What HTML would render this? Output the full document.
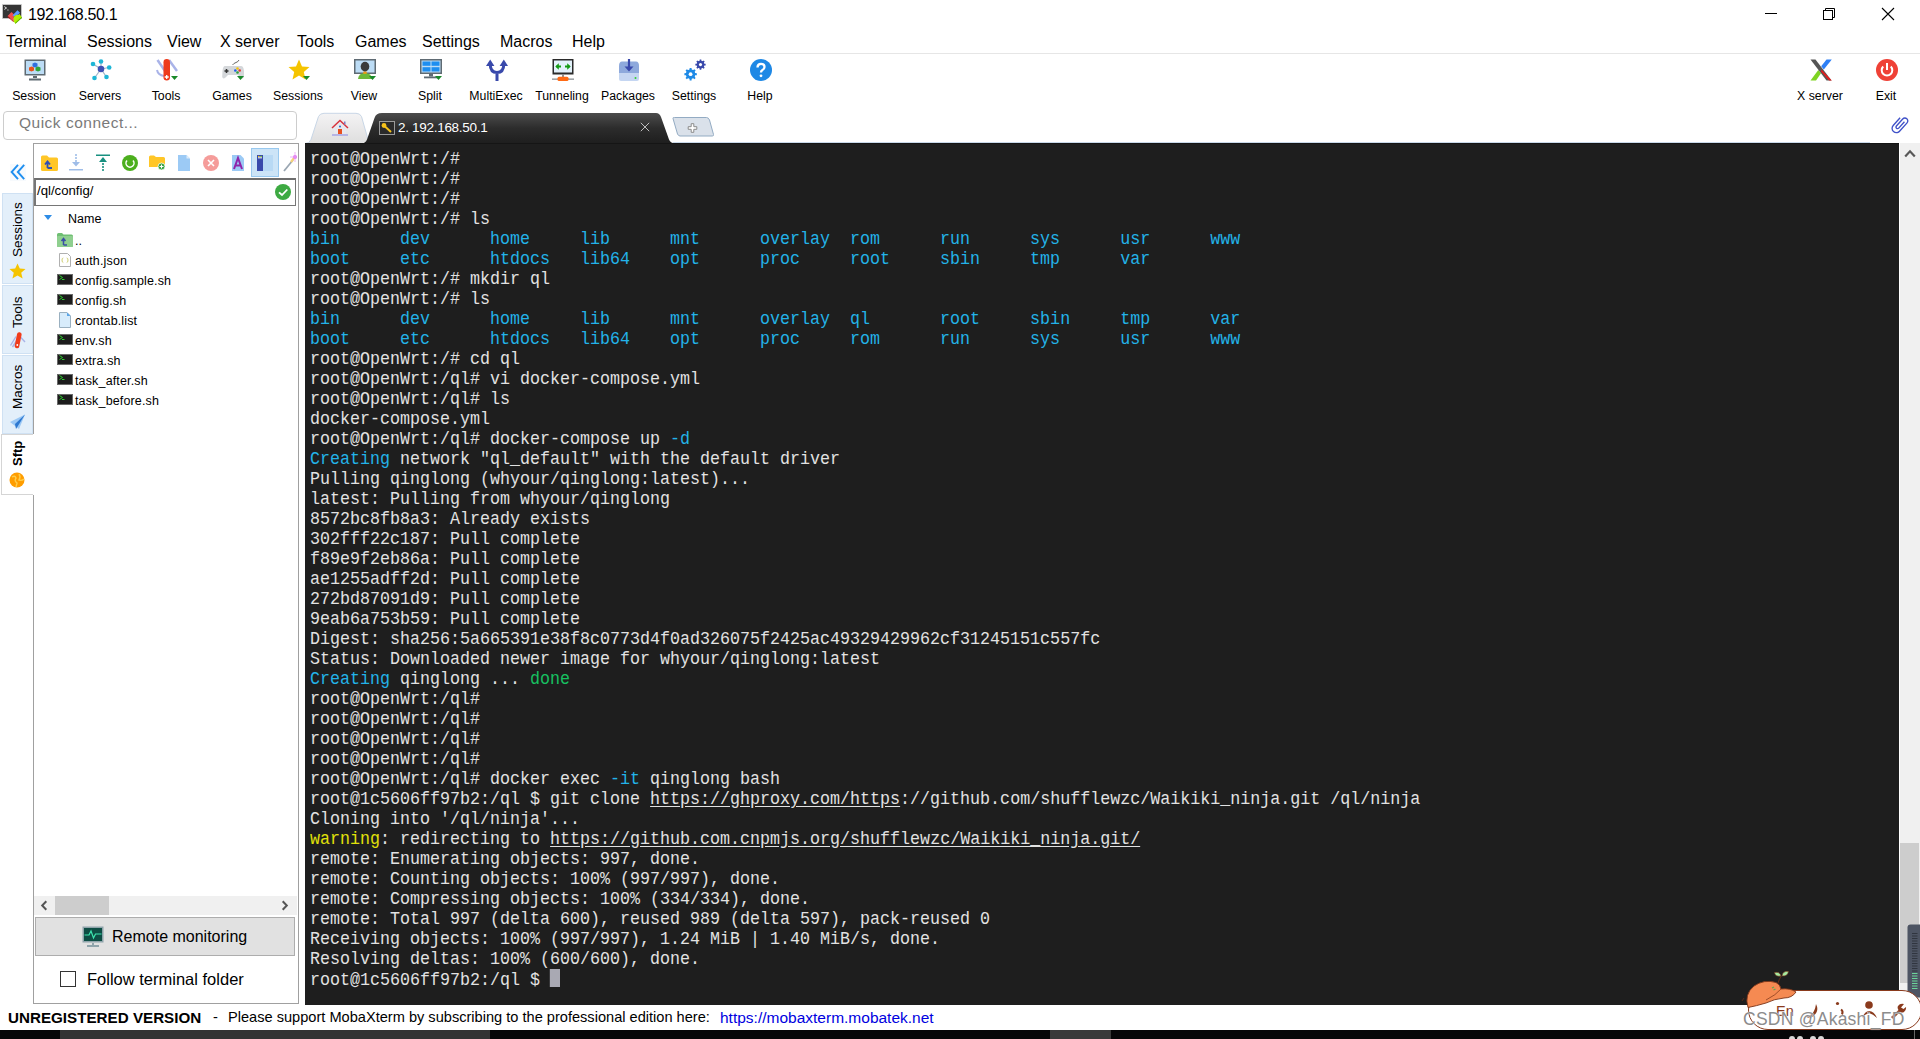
<!DOCTYPE html>
<html><head><meta charset="utf-8"><style>
*{margin:0;padding:0;box-sizing:border-box}
html,body{width:1920px;height:1039px;overflow:hidden;background:#fff;font-family:"Liberation Sans",sans-serif;color:#000}
.a{position:absolute}
.t{position:absolute;white-space:pre;line-height:1}
#term{position:absolute;left:305px;top:143px;width:1594px;height:862px;background:#1e1e1e;overflow:hidden}
#tt{position:absolute;left:5px;top:6px;font-family:"Liberation Mono",monospace;font-size:18px;line-height:20px;transform:scaleX(0.92593);transform-origin:0 0;color:#e2e2e2;white-space:pre}
#tt .c{color:#23b3e8}
#tt .g{color:#17c061}
#tt .y{color:#e1e10a}
#tt .u{text-decoration:underline;text-underline-offset:2px}
#tt .k{background:#a9a9b3;display:inline-block;width:10.8px;height:18px;vertical-align:1px}
.menu{font-size:16px;top:34px}
.tb{font-size:12.3px;top:90px;width:80px;text-align:center}
.vt{position:absolute;left:2px;width:31px;background:#e3effa;border:1px solid #cfe1f3}
.vtx{position:absolute;font-size:13.5px;transform:rotate(-90deg);transform-origin:0 0;white-space:pre;line-height:1}
.fl{position:absolute;left:75px;font-size:12.5px;line-height:1;white-space:pre;letter-spacing:0.15px}
</style></head><body>
<svg class="a" style="left:0px;top:0px" width="26" height="26" viewBox="0 0 26 26">
<rect x="2.5" y="4.5" width="19" height="14" fill="#353535" stroke="#cfcfcf" stroke-width="0.8"/>
<path d="M4.3 6.6 L6.6 8 L4.3 9.4" stroke="#e0e0e0" stroke-width="1" fill="none"/><path d="M7 10 H8.8" stroke="#bbb" stroke-width="0.8"/>
<path d="M7.6 16 L11.5 12 L13.5 14 L15 15.6 L13.7 17 L14 21.5 Z" fill="#f25050"/>
<path d="M7.6 16 L14 21.5 L13.5 22 L7.8 17.2Z" fill="#b01010"/>
<path d="M12.4 15.5 L17.5 10.3 L20 12.8 L18.2 14.8 L16.2 15 L15 16.5 Z" fill="#5b9cff"/>
<path d="M13.7 17 L16 15 L18.2 15 L19.6 14 L22 17.8 L15.5 23.7 L13.7 21.5 Z" fill="#b2f000"/>
<path d="M22 17.8 L15.5 23.7 L15 23 L21.5 17Z" fill="#5ab000"/>
</svg>
<div class="t" style="left:28px;top:6.5px;font-size:16px;letter-spacing:-0.35px">192.168.50.1</div>
<div class="a" style="left:1765px;top:13px;width:12px;height:1px;background:#000"></div>
<svg class="a" style="left:1822px;top:7px" width="15" height="15" viewBox="0 0 15 15">
<rect x="1.5" y="3.5" width="9" height="9" fill="none" stroke="#000" stroke-width="1"/>
<path d="M3.5 3.5 V1.5 H12.5 V10.5 H10.5" fill="none" stroke="#000" stroke-width="1"/></svg>
<svg class="a" style="left:1881px;top:7px" width="15" height="15" viewBox="0 0 15 15">
<path d="M1 1 L13 13 M13 1 L1 13" stroke="#000" stroke-width="1.1"/></svg>
<div class="t menu" style="left:6px">Terminal</div>
<div class="t menu" style="left:87px">Sessions</div>
<div class="t menu" style="left:167px">View</div>
<div class="t menu" style="left:220px">X server</div>
<div class="t menu" style="left:297px">Tools</div>
<div class="t menu" style="left:355px">Games</div>
<div class="t menu" style="left:422px">Settings</div>
<div class="t menu" style="left:500px">Macros</div>
<div class="t menu" style="left:572px">Help</div>
<div class="a" style="left:0;top:53px;width:1920px;height:1px;background:#e6e6e6"></div>
<div class="t tb" style="left:-6px">Session</div>
<svg class="a" style="left:24px;top:59px" width="22" height="22" viewBox="0 0 22 22">
<rect x="0.5" y="0.5" width="21" height="16" fill="#5f6b73"/>
<rect x="2" y="2" width="18" height="13" fill="#bcdcf5"/>
<rect x="9" y="17" width="4" height="2" fill="#5f6b73"/><rect x="5" y="19.5" width="12" height="2" fill="#5f6b73"/>
<path d="M8.5 4.5 L11 3.5 L13.5 4.5 V7.5 L11 8.5 L8.5 7.5Z" fill="#2f6fe0"/>
<path d="M5 8.5 L7.5 7.5 L10 8.5 V11.5 L7.5 12.5 L5 11.5Z" fill="#e8531d"/>
<path d="M11.5 8.5 L14 7.5 L16.5 8.5 V11.5 L14 12.5 L11.5 11.5Z" fill="#2ea33a"/>
</svg>
<div class="t tb" style="left:60px">Servers</div>
<svg class="a" style="left:90px;top:59px" width="22" height="22" viewBox="0 0 22 22">
<g stroke="#9fb4c8" stroke-width="1.2"><line x1="11" y1="10" x2="11" y2="2.5"/><line x1="11" y1="10" x2="3" y2="5"/><line x1="11" y1="10" x2="19" y2="8.5"/><line x1="11" y1="10" x2="4.5" y2="19"/><line x1="11" y1="10" x2="16.5" y2="18"/></g>
<circle cx="11" cy="10" r="3.3" fill="#3f51b5"/>
<circle cx="11" cy="2.5" r="2.3" fill="#1eb6d6"/><circle cx="3" cy="5" r="2.3" fill="#1eb6d6"/><circle cx="19.2" cy="8.5" r="2.3" fill="#1eb6d6"/>
<circle cx="4.5" cy="19" r="2.3" fill="#1eb6d6"/><circle cx="16.5" cy="18" r="2.3" fill="#1eb6d6"/>
</svg>
<div class="t tb" style="left:126px">Tools</div>
<svg class="a" style="left:156px;top:59px" width="22" height="22" viewBox="0 0 22 22">
<path d="M1.5 1 L9 12" stroke="#a9b3e8" stroke-width="2.5"/>
<path d="M13 1 L21 12" stroke="#a9b3e8" stroke-width="2.5"/>
<path d="M1 11 Q2 16 8 17" stroke="#a9b3e8" stroke-width="2" fill="none"/>
<rect x="7.5" y="0" width="6.5" height="21.5" rx="3.2" fill="#ee3b1c"/>
<path d="M10.7 16 V20 M8.7 18 H12.7" stroke="#fff" stroke-width="1.3"/>
<path d="M15 17 H22 L18.5 21 Z" fill="#1a8a2a"/></svg>
<div class="t tb" style="left:192px">Games</div>
<svg class="a" style="left:222px;top:59px" width="22" height="22" viewBox="0 0 22 22">
<path d="M10.5 6 Q12 4 14 3.5 Q16 3 17 1" stroke="#555" stroke-width="0.9" fill="none"/>
<path d="M3 7 H19 Q21.5 7 22 12 L22 18 Q21 20.5 18.5 18.5 L16 16 H6 L3.5 18.5 Q1 20.5 0.2 18 L0.5 12 Q1 7 3 7Z" fill="#d4d7da"/>
<path d="M4.5 10 V14 M2.5 12 H6.5" stroke="#333" stroke-width="1.5"/>
<circle cx="15.5" cy="9.5" r="1.3" fill="#f4c20d"/><circle cx="13.3" cy="11.5" r="1.3" fill="#1e5ee8"/><circle cx="17.7" cy="11.5" r="1.3" fill="#e53935"/><circle cx="15.5" cy="13.5" r="1.3" fill="#2e9e3a"/>
<path d="M15 17 H22 L18.5 21 Z" fill="#1a8a2a"/></svg>
<div class="t tb" style="left:258px">Sessions</div>
<svg class="a" style="left:288px;top:59px" width="22" height="22" viewBox="0 0 22 22">
<path d="M11 0.5 L14 7.5 L21.5 8 L15.8 13 L17.5 20.5 L11 16.5 L4.5 20.5 L6.2 13 L0.5 8 L8 7.5Z" fill="#f5c400"/>
<path d="M15 17 H22 L18.5 21 Z" fill="#1a8a2a"/></svg>
<div class="t tb" style="left:324px">View</div>
<svg class="a" style="left:354px;top:59px" width="22" height="22" viewBox="0 0 22 22">
<rect x="0" y="0" width="22" height="15" fill="#5f6b73"/>
<rect x="1.5" y="1.5" width="19" height="12" fill="#bcdcf5"/>
<path d="M4 20 Q4.5 14 11 14 Q17.5 14 18 20Z" fill="#6cb83a"/>
<rect x="9.3" y="12.5" width="3.4" height="2.3" fill="#f39c12"/>
<ellipse cx="11" cy="7.6" rx="4.3" ry="4.9" fill="#3a3a3a"/>
<path d="M15 17 H22 L18.5 21 Z" fill="#1a8a2a"/></svg>
<div class="t tb" style="left:390px">Split</div>
<svg class="a" style="left:420px;top:59px" width="22" height="22" viewBox="0 0 22 22">
<rect x="0" y="0" width="22" height="15" fill="#5f6b73"/>
<rect x="1.5" y="1.5" width="19" height="12" fill="#bcdcf5"/>
<rect x="2.5" y="2.5" width="8" height="4.3" fill="#1e8ef0"/><rect x="11.5" y="2.5" width="8" height="4.3" fill="#1e8ef0"/>
<rect x="2.5" y="8.2" width="8" height="4.3" fill="#1e8ef0"/><rect x="11.5" y="8.2" width="8" height="4.3" fill="#1e8ef0"/>
<rect x="9" y="15" width="4" height="2.5" fill="#5f6b73"/><rect x="4" y="17.5" width="14" height="1.8" fill="#5f6b73"/>
<path d="M15 17 H22 L18.5 21 Z" fill="#1a8a2a"/></svg>
<div class="t tb" style="left:456px">MultiExec</div>
<svg class="a" style="left:486px;top:59px" width="22" height="22" viewBox="0 0 22 22">
<path d="M4.2 5 Q4.2 13.5 11 13.5 Q17.8 13.5 17.8 5 M11 13.5 V22" stroke="#3949ab" stroke-width="3" fill="none"/>
<path d="M0 7 L4.2 0.5 L8.4 7Z" fill="#3949ab"/><path d="M13.6 7 L17.8 0.5 L22 7Z" fill="#3949ab"/>
</svg>
<div class="t tb" style="left:522px">Tunneling</div>
<svg class="a" style="left:552px;top:59px" width="22" height="22" viewBox="0 0 22 22">
<rect x="0.5" y="0" width="21" height="15.5" fill="#2b2b2b"/>
<rect x="2" y="1.5" width="18" height="12" fill="#e3f1fb"/>
<path d="M4.5 7.5 H9 M13 7.5 H17.5" stroke="#139a13" stroke-width="1.8"/>
<path d="M3.3 7.5 L6.8 4.3 V10.7Z M18.7 7.5 L15.2 4.3 V10.7Z" fill="#139a13"/>
<rect x="10.2" y="15.5" width="1.6" height="3" fill="#777"/>
<rect x="0" y="19.5" width="22" height="1.3" fill="#8a8f94"/>
<rect x="5.5" y="17.8" width="11" height="4.2" rx="1.5" fill="#ff6a14"/>
</svg>
<div class="t tb" style="left:588px">Packages</div>
<svg class="a" style="left:618px;top:59px" width="22" height="22" viewBox="0 0 22 22">
<path d="M1 7 Q1 2.5 4 2.5 H18 Q21 2.5 21 7 V14 H1Z" fill="#8ea9dc"/>
<path d="M1 14 H21 V20 Q21 22 19 22 H3 Q1 22 1 20Z" fill="#c5d6f2"/>
<circle cx="17.5" cy="19" r="1" fill="#2fd12f"/>
<path d="M11 0 V9" stroke="#3949ab" stroke-width="2.2"/><path d="M6.5 7.5 L11 12.5 L15.5 7.5Z" fill="#3949ab"/>
</svg>
<div class="t tb" style="left:654px">Settings</div>
<svg class="a" style="left:684px;top:59px" width="22" height="22" viewBox="0 0 22 22"><polygon points="11.00,14.08 12.83,14.25 12.83,16.15 11.00,16.32 10.50,17.52 11.67,18.93 10.33,20.27 8.92,19.10 7.72,19.60 7.55,21.43 5.65,21.43 5.48,19.60 4.28,19.10 2.87,20.27 1.53,18.93 2.70,17.52 2.20,16.32 0.37,16.15 0.37,14.25 2.20,14.08 2.70,12.88 1.53,11.47 2.87,10.13 4.28,11.30 5.48,10.80 5.65,8.97 7.55,8.97 7.72,10.80 8.92,11.30 10.33,10.13 11.67,11.47 10.50,12.88" fill="#1e8ae6"/><circle cx="6.6" cy="15.2" r="4.63" fill="#1e8ae6"/><circle cx="6.6" cy="15.2" r="1.89" fill="#fff"/><polygon points="20.13,4.68 21.64,4.82 21.64,6.38 20.13,6.52 19.72,7.52 20.69,8.68 19.58,9.79 18.42,8.82 17.42,9.23 17.28,10.74 15.72,10.74 15.58,9.23 14.58,8.82 13.42,9.79 12.31,8.68 13.28,7.52 12.87,6.52 11.36,6.38 11.36,4.82 12.87,4.68 13.28,3.68 12.31,2.52 13.42,1.41 14.58,2.38 15.58,1.97 15.72,0.46 17.28,0.46 17.42,1.97 18.42,2.38 19.58,1.41 20.69,2.52 19.72,3.68" fill="#3949ab"/><circle cx="16.5" cy="5.6" r="3.82" fill="#3949ab"/><circle cx="16.5" cy="5.6" r="1.56" fill="#fff"/></svg>
<div class="t tb" style="left:720px">Help</div>
<svg class="a" style="left:750px;top:59px" width="22" height="22" viewBox="0 0 22 22">
<circle cx="11" cy="11" r="11" fill="#1e88e5"/>
<path d="M7.5 8.5 Q7.5 4.8 11 4.8 Q14.5 4.8 14.5 8 Q14.5 10 12.2 11.2 Q11 11.9 11 13.5" stroke="#fff" stroke-width="2.3" fill="none"/>
<circle cx="11" cy="16.8" r="1.4" fill="#fff"/>
</svg>
<div class="t tb" style="left:1780px">X server</div>
<svg class="a" style="left:1810px;top:59px" width="22" height="22" viewBox="0 0 22 22">
<path d="M6 21.5 H0.5 L8.3 11 L11 14.3Z" fill="#7ed321"/>
<path d="M16.5 0.5 H21.8 L13.8 10.5 L11.2 7.2Z" fill="#2f80f5"/>
<path d="M0.5 0.5 H5.5 L21.5 21.5 H16.5Z" fill="#555"/>
<path d="M11.5 10.5 L21.8 21.5 H19 L11 12.5Z" fill="#e41e1e"/>
</svg>
<div class="t tb" style="left:1846px">Exit</div>
<svg class="a" style="left:1876px;top:59px" width="22" height="22" viewBox="0 0 22 22">
<circle cx="11" cy="11" r="11" fill="#ef4136"/>
<path d="M7.2 7.5 A5.3 5.3 0 1 0 14.8 7.5" stroke="#fff" stroke-width="2" fill="none"/>
<path d="M11 4 V11" stroke="#fff" stroke-width="2"/>
</svg>
<div class="a" style="left:3px;top:111px;width:294px;height:29px;border:1px solid #cdcdcd;border-radius:4px"></div>
<div class="t" style="left:19px;top:115px;font-size:15.5px;color:#7a7a7a;letter-spacing:0.5px">Quick connect...</div>
<svg class="a" style="left:300px;top:110px" width="420" height="34" viewBox="0 0 420 34">
<defs><linearGradient id="hg" x1="0" y1="0" x2="0" y2="1"><stop offset="0" stop-color="#f4f3f4"/><stop offset="1" stop-color="#dedede"/></linearGradient>
<linearGradient id="dg" x1="0" y1="0" x2="0" y2="1"><stop offset="0" stop-color="#4c4c4c"/><stop offset="0.5" stop-color="#2c2c2c"/><stop offset="1" stop-color="#1e1e1e"/></linearGradient></defs>
<path d="M5 33.5 Q9.5 33.5 11 29.5 L18.5 6.5 Q20 3.3 24 3.3 L56 3.3 Q60 3.3 61.5 6.5 L68 29.5 Q69 33.5 73 33.5Z" fill="url(#hg)" stroke="#c8d6e6" stroke-width="1"/>
<path d="M61 33.5 Q65.5 33.5 67 29.5 L74.5 8 Q76 3 82 3 L356 3 Q359.5 3 361 7 L369 29.5 Q370.5 33.5 376 33.5Z" fill="url(#dg)"/>
<path d="M373 8.5 Q372.5 7.5 374.5 7.5 L406.5 7.5 Q408.5 7.5 409.5 10 L413.5 24.5 Q413.8 26 412.3 26 L380 26 Q378.5 26 377.5 24Z" fill="#dae1ea" stroke="#93abc3" stroke-width="1"/>
<path d="M391.2 13.7 h2.6 v3 h3 v2.6 h-3 v3 h-2.6 v-3 h-3 v-2.6 h3Z" fill="#fff" stroke="#8a8a8a" stroke-width="1"/>
</svg>
<svg class="a" style="left:331px;top:119px" width="18" height="18" viewBox="0 0 18 18">
<path d="M3 8 V16 H15 V8 L9 3Z" fill="#e8e8ee"/>
<rect x="7" y="10" width="4" height="6" fill="#e8501e"/>
<circle cx="9" cy="7.5" r="1" fill="#2a6ac8"/>
<rect x="1" y="15" width="16" height="2" fill="#b5b5e5"/>
<path d="M1 9 L9 1.5 L17 9" stroke="#d8323c" stroke-width="1.5" fill="none"/>
<rect x="13" y="2.5" width="1.5" height="3" fill="#8080c0"/></svg>
<svg class="a" style="left:379px;top:121px" width="16" height="14" viewBox="0 0 16 14">
<rect x="0.5" y="0.5" width="15" height="13" fill="#2a2a2a" stroke="#9a9a9a" stroke-width="1"/>
<circle cx="5" cy="4.5" r="2.4" fill="#f5c21b"/>
<path d="M6 5.5 L12 11" stroke="#f5c21b" stroke-width="2"/></svg>
<div class="t" style="left:398px;top:121px;font-size:13.5px;color:#fff;letter-spacing:-0.3px">2. 192.168.50.1</div>
<svg class="a" style="left:640px;top:122px" width="10" height="10" viewBox="0 0 10 10"><path d="M0.8 0.8 L9.2 9.2 M9.2 0.8 L0.8 9.2" stroke="#cfcfcf" stroke-width="0.9"/></svg>
<div class="a" style="left:673px;top:142px;width:1197px;height:1px;background:#c9d9ea"></div>
<svg class="a" style="left:1890px;top:115px" width="20" height="20" viewBox="0 0 20 20"><g transform="translate(-0.8 -0.8) scale(0.9) rotate(42 12 12) translate(24 0) scale(-1 1)"><path d="M16.5 6v11.5c0 2.21-1.79 4-4 4s-4-1.79-4-4V5c0-1.38 1.12-2.5 2.5-2.5s2.5 1.12 2.5 2.5v10.5c0 .55-.45 1-1 1s-1-.45-1-1V6H10v9.5c0 1.380 1.12 2.5 2.5 2.5s2.5-1.12 2.5-2.5V5c0-2.21-1.79-4-4-4S7 2.79 7 5v12.5c0 3.04 2.46 5.5 5.5 5.5s5.5-2.46 5.5-5.5V6h-1.5z" fill="#3f51c8"/></g></svg>
<div id="term"><div class="a" style="left:0;top:0;width:1594px;height:1px;background:#151515"></div><div id="tt">root@OpenWrt:/#
root@OpenWrt:/#
root@OpenWrt:/#
root@OpenWrt:/# ls
<span class="c">bin      dev      home     lib      mnt      overlay  rom      run      sys      usr      www</span>
<span class="c">boot     etc      htdocs   lib64    opt      proc     root     sbin     tmp      var</span>
root@OpenWrt:/# mkdir ql
root@OpenWrt:/# ls
<span class="c">bin      dev      home     lib      mnt      overlay  ql       root     sbin     tmp      var</span>
<span class="c">boot     etc      htdocs   lib64    opt      proc     rom      run      sys      usr      www</span>
root@OpenWrt:/# cd ql
root@OpenWrt:/ql# vi docker-compose.yml
root@OpenWrt:/ql# ls
docker-compose.yml
root@OpenWrt:/ql# docker-compose up <span class="c">-d</span>
<span class="c">Creating</span> network &quot;ql_default&quot; with the default driver
Pulling qinglong (whyour/qinglong:latest)...
latest: Pulling from whyour/qinglong
8572bc8fb8a3: Already exists
302fff22c187: Pull complete
f89e9f2eb86a: Pull complete
ae1255adff2d: Pull complete
272bd87091d9: Pull complete
9eab6a753b59: Pull complete
Digest: sha256:5a665391e38f8c0773d4f0ad326075f2425ac49329429962cf31245151c557fc
Status: Downloaded newer image for whyour/qinglong:latest
<span class="c">Creating</span> qinglong ... <span class="g">done</span>
root@OpenWrt:/ql#
root@OpenWrt:/ql#
root@OpenWrt:/ql#
root@OpenWrt:/ql#
root@OpenWrt:/ql# docker exec <span class="c">-it</span> qinglong bash
root@1c5606ff97b2:/ql $ git clone <span class="u">https://ghproxy.com/https</span>://github.com/shufflewzc/Waikiki_ninja.git /ql/ninja
Cloning into &#x27;/ql/ninja&#x27;...
<span class="y">warning</span>: redirecting to <span class="u">https://github.com.cnpmjs.org/shufflewzc/Waikiki_ninja.git/</span>
remote: Enumerating objects: 997, done.
remote: Counting objects: 100% (997/997), done.
remote: Compressing objects: 100% (334/334), done.
remote: Total 997 (delta 600), reused 989 (delta 597), pack-reused 0
Receiving objects: 100% (997/997), 1.24 MiB | 1.40 MiB/s, done.
Resolving deltas: 100% (600/600), done.
root@1c5606ff97b2:/ql $ <span class="k"> </span></div></div>
<div class="a" style="left:10px;top:164px;width:16px;height:17px;background:#f7fafd"></div>
<svg class="a" style="left:9px;top:163px" width="17" height="18" viewBox="0 0 17 18"><path d="M9 1.8 L2.6 9 L9 16.2 M15.2 1.8 L8.8 9 L15.2 16.2" stroke="#1f8ff0" stroke-width="1.9" fill="none"/></svg>
<div class="vt" style="top:193px;height:91px"></div>
<div class="vtx" style="left:11px;top:257px">Sessions</div>
<div class="vt" style="top:285px;height:69px"></div>
<div class="vtx" style="left:11px;top:328px">Tools</div>
<div class="vt" style="top:355px;height:79px"></div>
<div class="vtx" style="left:11px;top:409px">Macros</div>
<div class="a" style="left:1px;top:434px;width:33px;height:61px;background:#fff;border:1px solid #d5d5d5;border-right:none"></div>
<div class="vtx" style="left:10.5px;top:466px;font-weight:bold;font-size:13px">Sftp</div>
<svg class="a" style="left:9px;top:263px" width="17" height="16" viewBox="0 0 17 16"><path d="M8.5 0.5 L10.8 5.6 L16.5 6 L12.2 9.8 L13.6 15.5 L8.5 12.4 L3.4 15.5 L4.8 9.8 L0.5 6 L6.2 5.6Z" fill="#f5c400"/></svg>
<svg class="a" style="left:9px;top:332px" width="17" height="17" viewBox="0 0 17 17"><path d="M1.5 13.5 L7 4.5 M3.5 15 L8 8 M10.5 4 L16 10" stroke="#a9b3e8" stroke-width="1.4"/><path d="M10.3 2.5 L8 14" stroke="#f03c1c" stroke-width="4.6" stroke-linecap="round"/><circle cx="8.3" cy="13" r="0.9" fill="#fff"/></svg>
<svg class="a" style="left:9px;top:413px" width="17" height="17" viewBox="0 0 17 17"><path d="M1 9 L16 1.5 L10 16Z" fill="#9bc8f5"/><path d="M16 1.5 L6 11 L7 16Z" fill="#2d78d0"/></svg>
<svg class="a" style="left:9px;top:472px" width="16" height="16" viewBox="0 0 16 16"><circle cx="8" cy="8" r="7.5" fill="#ff9d00"/><path d="M3 5 Q6 3 7 6 Q5 9 8 11 L7 15 M10 2 Q12 5 10 8 Q13 9 15 7" stroke="#ffcd4a" stroke-width="1.4" fill="none"/></svg>
<div class="a" style="left:33px;top:143px;width:266px;height:861px;border:1px solid #a0a0a0;border-left:1px solid #a0a0a0"></div>
<div class="a" style="left:33px;top:434px;width:1px;height:61px;background:#fff"></div>
<svg class="a" style="left:41px;top:155px" width="17" height="16" viewBox="0 0 17 16"><path d="M0 2 Q0 0.5 1.5 0.5 H6 L8 2.5 H15.5 Q17 2.5 17 4 V14.5 Q17 16 15.5 16 H1.5 Q0 16 0 14.5Z" fill="#ffc627"/><path d="M6.5 13 V7 M4 9.5 L6.5 6.5 L9 9.5 M6.5 13 H11" stroke="#2e4fb5" stroke-width="1.8" fill="none"/></svg>
<svg class="a" style="left:68px;top:154px" width="16" height="18" viewBox="0 0 16 18"><path d="M8 0 V11" stroke="#9fbde8" stroke-width="1.6" stroke-dasharray="2 1"/><path d="M4 8 L8 12.5 L12 8Z" fill="#9fbde8"/><rect x="1" y="15" width="14" height="1.5" fill="#9fbde8"/></svg>
<svg class="a" style="left:95px;top:154px" width="16" height="18" viewBox="0 0 16 18"><rect x="1" y="0.5" width="14" height="1.5" fill="#189080"/><path d="M8 17 V6" stroke="#189080" stroke-width="1.6" stroke-dasharray="2 1"/><path d="M4 8 L8 3 L12 8Z" fill="#189080"/></svg>
<svg class="a" style="left:122px;top:155px" width="16" height="16" viewBox="0 0 16 16"><circle cx="8" cy="8" r="8" fill="#4caf1e"/><path d="M5 5.5 A4 4 0 1 0 11 5.5" stroke="#fff" stroke-width="1.5" fill="none"/></svg>
<svg class="a" style="left:149px;top:155px" width="17" height="16" viewBox="0 0 17 16"><path d="M0 2 Q0 0.5 1.5 0.5 H5 L7 2 H14.5 Q16 2 16 3.5 V12 H0Z" fill="#ffc627"/><circle cx="12.5" cy="11.5" r="3.5" fill="#2e9e3a" stroke="#fff" stroke-width="0.8"/><path d="M12.5 9.5 V13.5 M10.5 11.5 H14.5" stroke="#fff" stroke-width="1.2"/></svg>
<svg class="a" style="left:178px;top:155px" width="12" height="16" viewBox="0 0 12 16"><path d="M0 0 H8.5 L12 3.5 V16 H0Z" fill="#9ccaf5"/><path d="M8.5 0 V3.5 H12" fill="#dcecfb"/></svg>
<svg class="a" style="left:203px;top:155px" width="16" height="16" viewBox="0 0 16 16"><circle cx="8" cy="8" r="8" fill="#f59c9a"/><path d="M5 5 L11 11 M11 5 L5 11" stroke="#fff" stroke-width="1.6"/></svg>
<svg class="a" style="left:232px;top:155px" width="12" height="16" viewBox="0 0 12 16"><path d="M0 0 H8.5 L12 3.5 V16 H0Z" fill="#9ccaf5"/><path d="M2 14 L6 3 L10 14 M3.5 10.5 H8.5" stroke="#8e24aa" stroke-width="2" fill="none"/></svg>
<div class="a" style="left:251px;top:148px;width:28px;height:29px;background:#cce4f7;border:1px solid #99c9ef"></div>
<svg class="a" style="left:257px;top:155px" width="17" height="16" viewBox="0 0 17 16"><rect x="0" y="0" width="6" height="16" fill="#3949ab"/><rect x="6" y="0" width="10" height="16" fill="#b8d9f4"/><rect x="1" y="1.5" width="4" height="2" fill="#c0c8e0"/><circle cx="1.7" cy="1.5" r="0.7" fill="#ffd400"/><circle cx="4.3" cy="1.5" r="0.7" fill="#7ed321"/></svg>
<svg class="a" style="left:283px;top:152px" width="14" height="20" viewBox="0 0 14 20"><path d="M1 19 L10 8" stroke="#9aa6b2" stroke-width="1.8"/><path d="M8 10 L11 6" stroke="#f6d27a" stroke-width="2.2"/><circle cx="12" cy="5" r="2" fill="#e070f0"/><path d="M12 0 V10 M7 5 H14" stroke="#e8a0f5" stroke-width="0.8"/></svg>
<div class="a" style="left:34px;top:178px;width:262px;height:28px;border:1px solid #767676;border-top:2px solid #6e6e6e;border-left:2px solid #777;background:#fff"></div>
<div class="t" style="left:37px;top:184px;font-size:13.2px">/ql/config/</div>
<svg class="a" style="left:275px;top:184px" width="16" height="16" viewBox="0 0 16 16"><circle cx="8" cy="8" r="8" fill="#3daa42"/><path d="M4 8.3 L7 11 L12.3 5.5" stroke="#fff" stroke-width="1.8" fill="none"/></svg>
<svg class="a" style="left:44px;top:215px" width="8" height="5" viewBox="0 0 8 5"><path d="M0 0 H8 L4 5Z" fill="#2d8ce6"/></svg>
<div class="t" style="left:68px;top:213px;font-size:12.5px">Name</div>
<div class="fl" style="top:235px">..</div>
<svg class="a" style="left:57px;top:233px" width="16" height="14" viewBox="0 0 16 14"><path d="M0 1.5 Q0 0 1.5 0 H5 L6.5 1.5 H14.5 Q16 1.5 16 3 V12.5 Q16 14 14.5 14 H1.5 Q0 14 0 12.5Z" fill="#6fbf73"/><rect x="0" y="3" width="16" height="11" rx="1" fill="#8fcf8f"/><path d="M6.5 12 V6 M4.5 8 L6.5 5.5 L8.5 8 M6.5 12 H10" stroke="#3a4fa5" stroke-width="1.5" fill="none"/></svg>
<div class="fl" style="top:255px">auth.json</div>
<svg class="a" style="left:59px;top:253px" width="12" height="14" viewBox="0 0 12 14"><path d="M0.5 0.5 H8.5 L11.5 3.5 V13.5 H0.5Z" fill="#fff" stroke="#b0b0b0"/><path d="M4.3 5 Q3 5 3 7 Q3 9.5 4.3 9.5 M7.7 5 Q9 5 9 7 Q9 9.5 7.7 9.5" stroke="#c8c860" stroke-width="0.9" fill="none"/></svg>
<div class="fl" style="top:275px">config.sample.sh</div>
<div class="a" style="left:57px;top:274px;width:16px;height:11px;background:#1c1c1c;border:1px solid #6a6a6a"></div>
<svg class="a" style="left:59px;top:275px" width="6" height="5" viewBox="0 0 6 5"><path d="M0.5 0.5 L3.5 2.5 L0.5 4.5 M3 4.5 H5.5" stroke="#2fd02f" stroke-width="1" fill="none"/></svg>
<div class="fl" style="top:295px">config.sh</div>
<div class="a" style="left:57px;top:294px;width:16px;height:11px;background:#1c1c1c;border:1px solid #6a6a6a"></div>
<svg class="a" style="left:59px;top:295px" width="6" height="5" viewBox="0 0 6 5"><path d="M0.5 0.5 L3.5 2.5 L0.5 4.5 M3 4.5 H5.5" stroke="#2fd02f" stroke-width="1" fill="none"/></svg>
<div class="fl" style="top:315px">crontab.list</div>
<svg class="a" style="left:59px;top:312px" width="12" height="16" viewBox="0 0 12 16"><path d="M0.5 0.5 H8 L11.5 4 V15.5 H0.5Z" fill="#d8ecfb" stroke="#9ab0c0"/><path d="M8 0.5 V4 H11.5" fill="#5aa6e8"/></svg>
<div class="fl" style="top:335px">env.sh</div>
<div class="a" style="left:57px;top:334px;width:16px;height:11px;background:#1c1c1c;border:1px solid #6a6a6a"></div>
<svg class="a" style="left:59px;top:335px" width="6" height="5" viewBox="0 0 6 5"><path d="M0.5 0.5 L3.5 2.5 L0.5 4.5 M3 4.5 H5.5" stroke="#2fd02f" stroke-width="1" fill="none"/></svg>
<div class="fl" style="top:355px">extra.sh</div>
<div class="a" style="left:57px;top:354px;width:16px;height:11px;background:#1c1c1c;border:1px solid #6a6a6a"></div>
<svg class="a" style="left:59px;top:355px" width="6" height="5" viewBox="0 0 6 5"><path d="M0.5 0.5 L3.5 2.5 L0.5 4.5 M3 4.5 H5.5" stroke="#2fd02f" stroke-width="1" fill="none"/></svg>
<div class="fl" style="top:375px">task_after.sh</div>
<div class="a" style="left:57px;top:374px;width:16px;height:11px;background:#1c1c1c;border:1px solid #6a6a6a"></div>
<svg class="a" style="left:59px;top:375px" width="6" height="5" viewBox="0 0 6 5"><path d="M0.5 0.5 L3.5 2.5 L0.5 4.5 M3 4.5 H5.5" stroke="#2fd02f" stroke-width="1" fill="none"/></svg>
<div class="fl" style="top:395px">task_before.sh</div>
<div class="a" style="left:57px;top:394px;width:16px;height:11px;background:#1c1c1c;border:1px solid #6a6a6a"></div>
<svg class="a" style="left:59px;top:395px" width="6" height="5" viewBox="0 0 6 5"><path d="M0.5 0.5 L3.5 2.5 L0.5 4.5 M3 4.5 H5.5" stroke="#2fd02f" stroke-width="1" fill="none"/></svg>
<div class="a" style="left:34px;top:896px;width:263px;height:19px;background:#f0f0f0"></div>
<div class="a" style="left:55px;top:896px;width:54px;height:19px;background:#cdcdcd"></div>
<svg class="a" style="left:40px;top:900px" width="8" height="11" viewBox="0 0 8 11"><path d="M6.3 1.2 L2.2 5.5 L6.3 9.8" stroke="#555" stroke-width="2" fill="none"/></svg>
<svg class="a" style="left:281px;top:900px" width="8" height="11" viewBox="0 0 8 11"><path d="M1.7 1.2 L5.8 5.5 L1.7 9.8" stroke="#555" stroke-width="2" fill="none"/></svg>
<div class="a" style="left:35px;top:917px;width:260px;height:39px;background:#e1e1e1;border:1px solid #adadad"></div>
<svg class="a" style="left:82px;top:926px" width="22" height="21" viewBox="0 0 22 21"><rect x="0.5" y="0.5" width="21" height="16" fill="#8fa4ab"/><rect x="2" y="2" width="18" height="13" fill="#0e4d44"/><path d="M2.5 9 H7 L9 5 L11.5 12 L13.5 8 H19.5" stroke="#3ee6b0" stroke-width="1.2" fill="none"/><rect x="10" y="17" width="2" height="2" fill="#8fa4ab"/><rect x="5" y="19" width="12" height="2" fill="#8fa4ab"/></svg>
<div class="t" style="left:112px;top:929px;font-size:16px">Remote monitoring</div>
<div class="a" style="left:60px;top:971px;width:16px;height:16px;border:1.5px solid #333;background:#fff"></div>
<div class="t" style="left:87px;top:971px;font-size:16.5px">Follow terminal folder</div>
<div class="a" style="left:1900px;top:143px;width:20px;height:861px;background:#f0f0f0"></div>
<svg class="a" style="left:1904px;top:149px" width="12" height="9" viewBox="0 0 12 9"><path d="M1.2 7.6 L6 2.3 L10.8 7.6" stroke="#585858" stroke-width="2.2" fill="none"/></svg>
<div class="a" style="left:1900px;top:843px;width:19px;height:140px;background:#cdcdcd"></div>
<div class="t" style="left:8px;top:1010px;font-size:15.2px;font-weight:bold">UNREGISTERED VERSION</div>
<div class="t" style="left:213px;top:1010px;font-size:14.6px">-</div>
<div class="t" style="left:228px;top:1010px;font-size:14.6px">Please support MobaXterm by subscribing to the professional edition here:</div>
<div class="t" style="left:720px;top:1010px;font-size:15.5px;color:#0000e0">https://mobaxterm.mobatek.net</div>
<div class="a" style="left:0;top:1030px;width:1920px;height:9px;background:#060608"></div>
<div class="a" style="left:60px;top:1030px;width:430px;height:9px;background:#333"></div>
<div class="a" style="left:1050px;top:1030px;width:61px;height:9px;background:#3a3a3a"></div>
<div class="a" style="left:1789px;top:1036px;width:6px;height:3px;background:#d8d8d8;border-radius:3px 3px 0 0"></div>
<div class="a" style="left:1797px;top:1036px;width:6px;height:3px;background:#d8d8d8;border-radius:3px 3px 0 0"></div>
<div class="a" style="left:1810px;top:1036px;width:6px;height:3px;background:#d8d8d8;border-radius:3px 3px 0 0"></div>
<div class="a" style="left:1818px;top:1036px;width:6px;height:3px;background:#d8d8d8;border-radius:3px 3px 0 0"></div>
<div class="a" style="left:1914px;top:1030px;width:1px;height:9px;background:#666"></div>
<svg class="a" style="left:1907px;top:924px" width="13" height="74" viewBox="0 0 13 74"><path d="M3.5 0.5 H13 V73.5 H3.5 Q0.5 73.5 0.5 70.5 V3.5 Q0.5 0.5 3.5 0.5Z" fill="#4d5463"/>
<g stroke="#30353f" stroke-width="1"><path d="M5 9.5 H10.5"/><path d="M5 12.0 H10.5"/><path d="M5 14.5 H10.5"/><path d="M5 17.0 H10.5"/><path d="M5 19.5 H10.5"/><path d="M5 22.0 H10.5"/><path d="M5 24.5 H10.5"/><path d="M5 27.0 H10.5"/><path d="M5 29.5 H10.5"/><path d="M5 32.0 H10.5"/><path d="M5 34.5 H10.5"/><path d="M5 37.0 H10.5"/><path d="M5 39.5 H10.5"/><path d="M5 42.0 H10.5"/><path d="M5 44.5 H10.5"/><path d="M5 47.0 H10.5"/></g>
<g stroke="#6ad69a" stroke-width="1"><path d="M5 49.5 H10.5"/><path d="M5 52.0 H10.5"/><path d="M5 54.5 H10.5"/><path d="M5 57.0 H10.5"/><path d="M5 59.5 H10.5"/><path d="M5 62.0 H10.5"/><path d="M5 64.5 H10.5"/></g></svg>
<div class="a" style="left:1748px;top:990px;width:174px;height:40px;background:#fff;border:1.6px solid #8a3a1c;border-radius:20px"></div>
<svg class="a" style="left:1740px;top:970px" width="60" height="42" viewBox="0 0 60 42"><path d="M8 37.5 Q4 24 14 16 Q24 9 36 12.5 Q40 14 41 19 Q50 18 56 22 Q52 28 44 28 Q34 29 26 33 Q16 36 8 37.5Z" fill="#f58a52" stroke="#7a3418" stroke-width="0.9"/>
<path d="M41 19 Q36 25 26 30" stroke="#7a3418" stroke-width="0.7" fill="none"/>
<path d="M32 18 l2 -1 M33.5 20 l2 -1" stroke="#5fa84f" stroke-width="1.3"/>
<path d="M38 13 Q39 9 41.5 6" stroke="#7a3418" stroke-width="0.8" fill="none"/>
<path d="M41 6 Q35 7 34.5 2.5 Q40 1.5 41 6Z" fill="#a6eaa0" stroke="#7a3418" stroke-width="0.6"/>
<path d="M42 6 Q43 0.5 48.5 1.5 Q47.5 6.5 42 6Z" fill="#a6eaa0" stroke="#7a3418" stroke-width="0.6"/>
<path d="M2 31 L4 28" stroke="#7a3418" stroke-width="0.6"/></svg>
<div class="t" style="left:1776px;top:1004px;font-size:14.5px;color:#8a3a1c">En</div>
<svg class="a" style="left:1803px;top:1003px" width="16" height="16" viewBox="0 0 16 16"><path d="M13 1 Q17 9 9 14 Q5 16 2 13 Q9 13 11 8 Q12.5 5 13 1Z" fill="#8a3a1c"/></svg>
<svg class="a" style="left:1834px;top:1000px" width="12" height="16" viewBox="0 0 12 16"><circle cx="3.5" cy="3.5" r="1.6" fill="#8a3a1c"/><path d="M7 9.5 Q9.5 11 8 14.5" stroke="#8a3a1c" stroke-width="2" fill="none"/></svg>
<svg class="a" style="left:1860px;top:1001px" width="18" height="20" viewBox="0 0 18 20"><circle cx="9" cy="4" r="3.8" fill="#8a3a1c"/><path d="M2 17 Q5 10 9 10 Q14 10 17 17 Q13 13 9 12 Q5 13 2 17Z" fill="#8a3a1c"/></svg>
<svg class="a" style="left:1888px;top:1002px" width="20" height="18" viewBox="0 0 20 18"><path d="M16 2 Q12 1 10 4 Q9 6 10.5 8 L3 15 L5 17 L12 10 Q14 11 16 10 Q18.5 8 18 5 L15.5 7 L13 5.5 Z" fill="#8a3a1c"/></svg>
<div class="t" style="left:1743px;top:1011px;font-size:17.5px;color:#8c8c8c;letter-spacing:0.25px;text-shadow:0 0 1px #fff,0 0 1px #fff">CSDN @Akashi_FD</div>
</body></html>
